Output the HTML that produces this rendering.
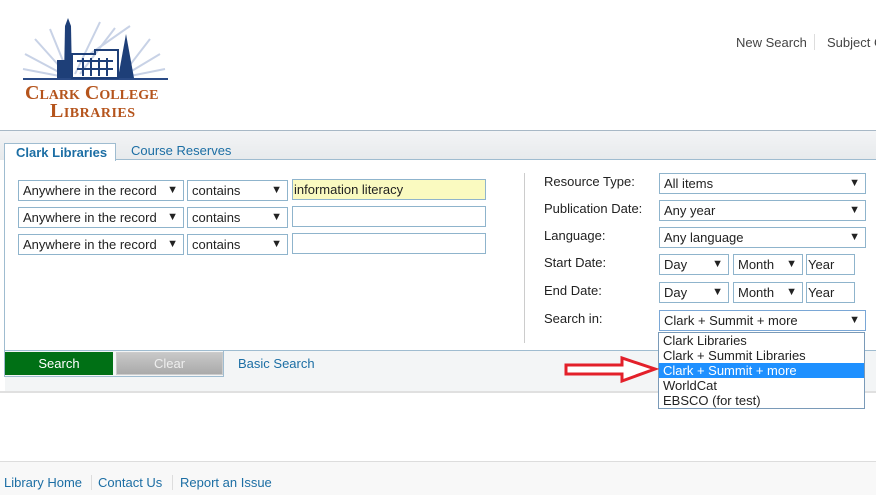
<!DOCTYPE html>
<html><head><style>
*{margin:0;padding:0;box-sizing:border-box}
body{width:876px;height:495px;overflow:hidden;background:#fff;font-family:"Liberation Sans",Arial,sans-serif;font-size:13px;color:#222;position:relative}
.a{position:absolute}
.sel{position:absolute;border:1px solid #8fb4cc;background:#fff;height:21px;font-size:13px;padding:2px 0 0 4px;white-space:nowrap}
.sel:after{content:"▼";position:absolute;right:5px;top:3px;font-size:11px}
.inp{position:absolute;border:1px solid #8fb4cc;background:#fff;height:21px;font-size:13px;padding:2px 0 0 1px}
.lbl{position:absolute;left:544px;font-size:13px}
.lnk{color:#1c6ea4}
</style></head><body>
<svg class="a" style="left:20px;top:14px" width="150" height="108" viewBox="0 0 150 108">
<g stroke="#c8d2e6" stroke-width="2">
<line x1="50" y1="64" x2="5" y2="40"/><line x1="50" y1="64" x2="15" y2="25"/><line x1="50" y1="64" x2="30" y2="15"/><line x1="55" y1="60" x2="80" y2="8"/><line x1="60" y1="60" x2="95" y2="14"/><line x1="100" y1="64" x2="140" y2="40"/><line x1="100" y1="64" x2="130" y2="25"/><line x1="100" y1="64" x2="145" y2="55"/><line x1="50" y1="64" x2="3" y2="55"/><line x1="70" y1="40" x2="110" y2="12"/>
</g>
<rect x="3" y="64" width="145" height="2" fill="#2a4a85"/>
<polygon points="44,64 45,12 48,4 51,12 52,64" fill="#1e3f78"/>
<rect x="37" y="46" width="8" height="18" fill="#1e3f78"/>
<path d="M52 64 V40 H75 V36 H98 V64 Z" fill="none" stroke="#1e3f78" stroke-width="2"/>
<g fill="#1e3f78"><rect x="57" y="46" width="36" height="2"/><rect x="57" y="54" width="36" height="2"/><rect x="62" y="44" width="2" height="18"/><rect x="70" y="44" width="2" height="18"/><rect x="78" y="44" width="2" height="18"/><rect x="86" y="44" width="2" height="18"/></g>
<polygon points="106,20 98,64 114,64" fill="#1e3f78"/>
</svg>
<div class="a" style="left:25px;top:84px;font-family:'Liberation Serif',serif;color:#b5541c;font-size:20px;font-weight:bold;font-variant:small-caps;letter-spacing:0;line-height:18px">Clark College</div>
<div class="a" style="left:50px;top:102px;font-family:'Liberation Serif',serif;color:#b5541c;font-size:20px;font-weight:bold;font-variant:small-caps;letter-spacing:.5px;line-height:18px">Libraries</div>
<div class="a" style="left:736px;top:35px;color:#444;font-size:13px">New Search</div>
<div class="a" style="left:814px;top:34px;width:1px;height:16px;background:#ddd"></div>
<div class="a" style="left:827px;top:35px;color:#444;font-size:13px;white-space:nowrap">Subject Guides</div>
<div class="a" style="left:0;top:130px;width:876px;height:30px;border-top:1px solid #a8b8c6;background:linear-gradient(#f3f4f6,#e7eaec)"></div>
<div class="a" style="left:4px;top:143px;width:112px;height:18px;background:#fff;border:1px solid #9fbcd0;border-bottom:none;color:#1c6ea4;font-weight:bold;font-size:13px;padding:1px 0 0 11px">Clark Libraries</div>
<div class="a lnk" style="left:131px;top:143px;font-size:13px">Course Reserves</div>
<div class="a" style="left:116px;top:159px;width:760px;height:1px;background:#9fbcd0"></div>
<div class="a" style="left:4px;top:160px;width:1px;height:216px;background:#9fbcd0"></div>
<div class="a" style="left:5px;top:350px;width:871px;height:41px;background:#f3f5f6;border-top:1px solid #9fbcd0"></div>
<div class="a" style="left:4px;top:376px;width:220px;height:1px;background:#9fbcd0"></div>
<div class="a" style="left:223px;top:351px;width:1px;height:26px;background:#9fbcd0"></div>
<div class="a" style="left:0;top:391px;width:876px;height:2px;background:#e0e0e0"></div>
<div class="a" style="left:5px;top:352px;width:108px;height:23px;background:#007015;color:#fff;text-align:center;padding-top:4px;font-size:13px">Search</div>
<div class="a" style="left:116px;top:352px;width:107px;height:23px;background:linear-gradient(#c8c8c8,#aaa);border:1px solid #ccc;color:#eee;text-align:center;padding-top:3px;font-size:13px">Clear</div>
<div class="a lnk" style="left:238px;top:356px">Basic Search</div>
<div class="sel" style="left:18px;top:180px;width:166px">Anywhere in the record</div>
<div class="sel" style="left:187px;top:180px;width:101px">contains</div>
<div class="inp" style="left:292px;top:179px;width:194px;background:#fafac0">information literacy</div>
<div class="sel" style="left:18px;top:207px;width:166px">Anywhere in the record</div>
<div class="sel" style="left:187px;top:207px;width:101px">contains</div>
<div class="inp" style="left:292px;top:206px;width:194px"></div>
<div class="sel" style="left:18px;top:234px;width:166px">Anywhere in the record</div>
<div class="sel" style="left:187px;top:234px;width:101px">contains</div>
<div class="inp" style="left:292px;top:233px;width:194px"></div>
<div class="a" style="left:524px;top:173px;width:1px;height:170px;background:#ccc"></div>
<div class="lbl" style="top:174px">Resource Type:</div>
<div class="lbl" style="top:201px">Publication Date:</div>
<div class="lbl" style="top:228px">Language:</div>
<div class="lbl" style="top:255px">Start Date:</div>
<div class="lbl" style="top:283px">End Date:</div>
<div class="lbl" style="top:311px">Search in:</div>
<div class="sel" style="left:659px;top:173px;width:207px">All items</div>
<div class="sel" style="left:659px;top:200px;width:207px">Any year</div>
<div class="sel" style="left:659px;top:227px;width:207px">Any language</div>
<div class="sel" style="left:659px;top:254px;width:70px;top:254px">Day</div>
<div class="sel" style="left:733px;top:254px;width:70px">Month</div>
<div class="inp" style="left:806px;top:254px;width:49px">Year</div>
<div class="sel" style="left:659px;top:282px;width:70px">Day</div>
<div class="sel" style="left:733px;top:282px;width:70px">Month</div>
<div class="inp" style="left:806px;top:282px;width:49px">Year</div>
<div class="sel" style="left:659px;top:310px;width:207px;border-color:#7aa7d6">Clark + Summit + more</div>
<div class="a" style="left:658px;top:332px;width:207px;height:77px;background:#fff;border:1px solid #7a9ab8;font-size:13px;line-height:15px">
<div style="padding-left:4px">Clark Libraries</div>
<div style="padding-left:4px">Clark + Summit Libraries</div>
<div style="padding-left:4px;background:#1e90ff;color:#fff">Clark + Summit + more</div>
<div style="padding-left:4px">WorldCat</div>
<div style="padding-left:4px">EBSCO (for test)</div>
</div>
<svg class="a" style="left:563px;top:355px" width="96" height="30" viewBox="0 0 96 30">
<polygon points="3,10 59,10 59,3 92,14 59,26 59,19 3,19" fill="#fff" stroke="#e3202a" stroke-width="3"/>
</svg>
<div class="a" style="left:0;top:461px;width:876px;height:34px;background:#f8f8f8;border-top:1px solid #ddd"></div>
<div class="a lnk" style="left:4px;top:475px">Library Home</div>
<div class="a" style="left:91px;top:475px;width:1px;height:15px;background:#ddd"></div>
<div class="a lnk" style="left:98px;top:475px">Contact Us</div>
<div class="a" style="left:172px;top:475px;width:1px;height:15px;background:#ddd"></div>
<div class="a lnk" style="left:180px;top:475px">Report an Issue</div>
</body></html>
